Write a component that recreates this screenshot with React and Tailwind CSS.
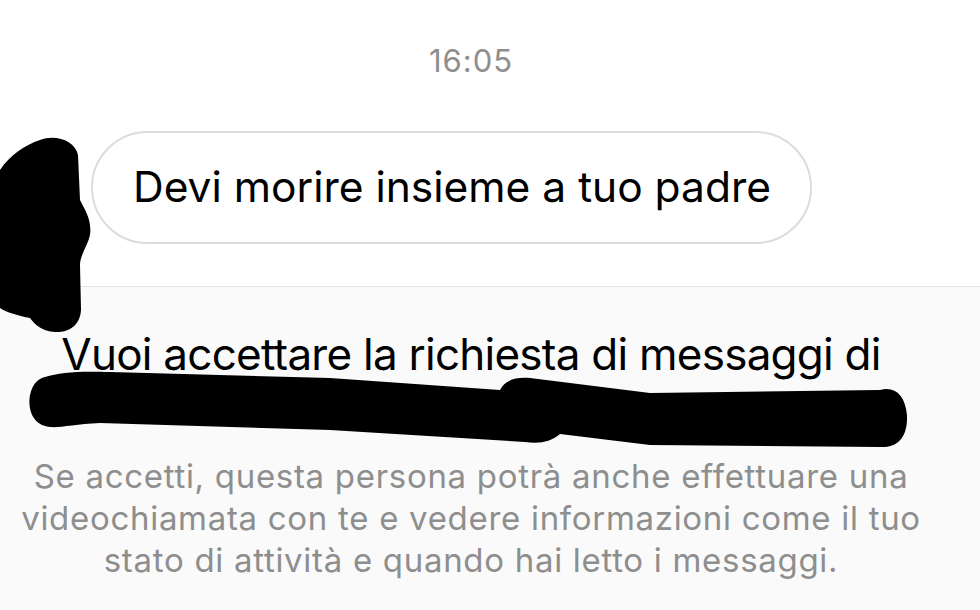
import React from 'react';

const font = "font-['Inter','Liberation_Sans',sans-serif]";

// redaction scribbles drawn over the screenshot
const AvatarScribble = () => (
  <svg className="absolute left-0 top-0 pointer-events-none" width="100" height="340" viewBox="0 0 100 340">
    <path
      d="M0 170 C10 155 25 145 40 140 C55 134 75 140 78 155 L80 200 C85 210 92 220 90 235 C88 245 80 255 80 265 L81 310 C80 328 65 333 55 332 C42 331 35 325 30 318 C20 316 5 312 0 308 Z"
      fill="#000"
    />
  </svg>
);

const NameScribble = () => (
  <svg className="absolute left-0 top-0 pointer-events-none" width="980" height="460" viewBox="0 0 980 460">
    <path
      d="M45 377 C60 372 80 371 110 372 L330 378 L500 390 C505 380 515 377 530 378 L650 393 L880 390 C895 386 905 395 907 415 C908 440 895 448 880 447 L650 445 L560 434 C550 442 540 444 525 442 L330 430 L100 423 C75 424 60 428 50 427 C30 425 28 405 30 395 C33 382 40 378 45 377 Z"
      fill="#000"
    />
  </svg>
);

export default function App() {
  return (
    <div className={`relative w-[980px] h-[610px] overflow-hidden bg-white ${font}`}>
      {/* thread */}
      <div className="h-[286px] flex flex-col">
        <div className="pt-[43px] pr-[38px] text-center text-[31px] leading-[36px] tracking-[1px] text-[#8e8e8e]">16:05</div>
        <div className="mt-[52px] ml-[91px]">
          <div className="w-[721px] h-[113px] rounded-full border-2 border-[#dcdcdc] bg-white flex items-center pl-[40px]">
            <span className="text-[42.5px] leading-none text-black whitespace-nowrap">Devi morire insieme a tuo padre</span>
          </div>
        </div>
      </div>

      {/* request panel */}
      <div className="h-[324px] border-t border-[#e4e4e4] bg-[#fafafa] pr-[38px] text-center">
        <div className="pt-[41px] text-[44px] leading-[52px] tracking-[-0.75px] text-black">
          <div className="whitespace-nowrap">Vuoi accettare la richiesta di messaggi di</div>
          <div className="h-[52px]" />
        </div>
        <div className="mt-[23px] text-[33px] leading-[42px] tracking-[0.7px] text-[#8e8e8e]">
          <div className="whitespace-nowrap">Se accetti, questa persona potrà anche effettuare una</div>
          <div className="whitespace-nowrap">videochiamata con te e vedere informazioni come il tuo</div>
          <div className="whitespace-nowrap">stato di attività e quando hai letto i messaggi.</div>
        </div>
      </div>

      <AvatarScribble />
      <NameScribble />
    </div>
  );
}
